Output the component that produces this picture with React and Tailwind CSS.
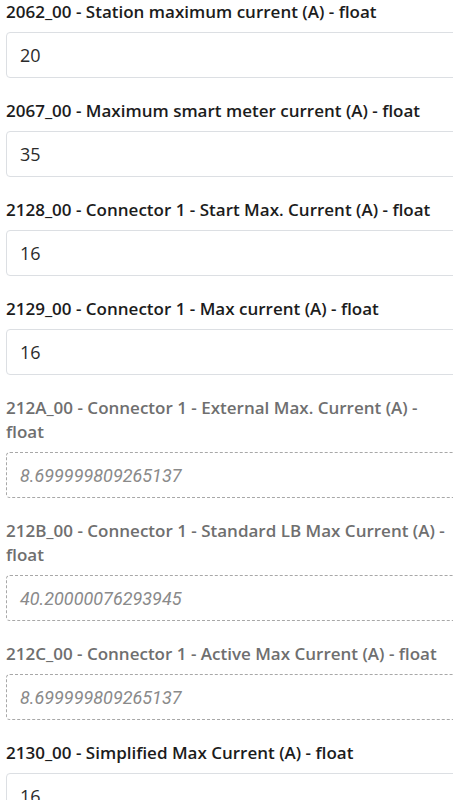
const FIELDS = [
  { label: '2062_00 - Station maximum current (A) - float', value: '20' },
  { label: '2067_00 - Maximum smart meter current (A) - float', value: '35' },
  { label: '2128_00 - Connector 1 - Start Max. Current (A) - float', value: '16' },
  { label: '2129_00 - Connector 1 - Max current (A) - float', value: '16' },
  { label: '212A_00 - Connector 1 - External Max. Current (A) - float', value: '8.699999809265137', readOnly: true },
  { label: '212B_00 - Connector 1 - Standard LB Max Current (A) - float', value: '40.20000076293945', readOnly: true },
  { label: '212C_00 - Connector 1 - Active Max Current (A) - float', value: '8.699999809265137', readOnly: true },
  { label: '2130_00 - Simplified Max Current (A) - float', value: '16' },
]

function Field({ label, value, readOnly }) {
  return (
    <div className="mb-[21px]">
      <label
        className={
          'block pr-1 text-[17px] leading-[24px] font-semibold ' +
          (readOnly ? 'text-[#6f6f6f]' : 'text-[#1c1c1c]')
        }
      >
        {label}
      </label>
      <div
        className={
          'mt-[8px] w-[470px] h-[46px] rounded-[4px] flex items-center pl-[13px] text-[18px] ' +
          (readOnly
            ? 'border border-dashed border-[#a8a8a8] italic text-[#8a8a8a] font-[Roboto,sans-serif]'
            : 'border border-[#dcdfe3] text-[#2b2b2b]')
        }
      >
        {value}
      </div>
    </div>
  )
}

export default function App() {
  return (
    <div
      className="w-[453px] h-[800px] overflow-hidden bg-white pl-[6px]"
      style={{ fontFamily: '"Open Sans", "Noto Sans", sans-serif' }}
    >
      {FIELDS.map(f => (
        <Field key={f.label} {...f} />
      ))}
    </div>
  )
}
